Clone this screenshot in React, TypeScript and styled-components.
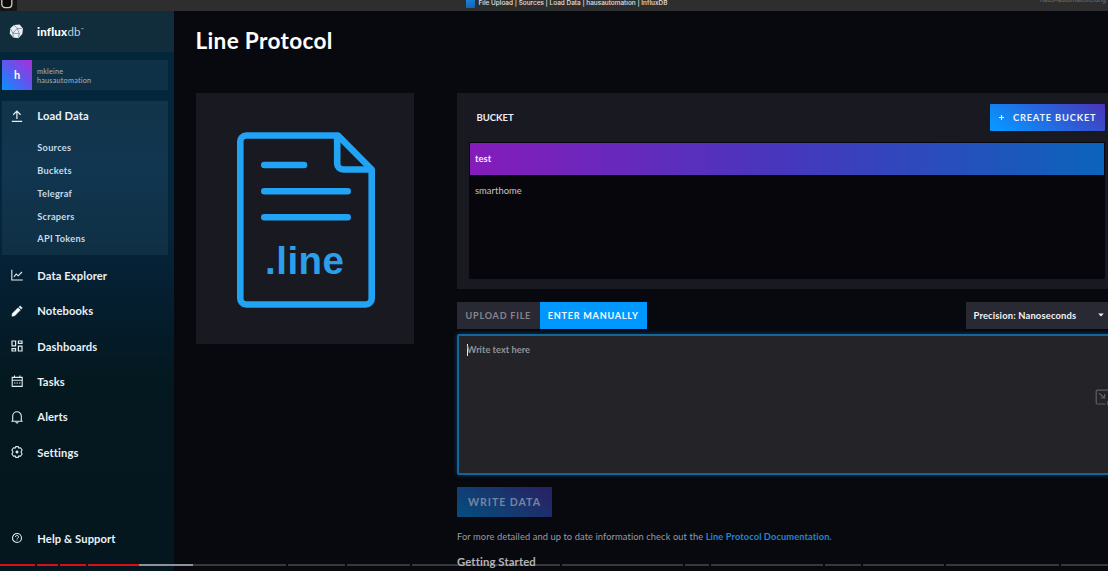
import React from 'react';
import styled, { createGlobalStyle } from 'styled-components';

const GlobalStyle = createGlobalStyle`
  * { box-sizing: border-box; }
  body {
    margin: 0;
    background: #08080f;
    overflow: hidden;
    font-family: Lato, "Liberation Sans", sans-serif;
  }
`;

const Page = styled.div`
  position: relative;
  display: flex;
  flex-direction: column;
  width: 1108px;
  height: 571px;
  overflow: hidden;
  background: #08080f;
  color: #f1f1f3;
`;

const TitleBar = styled.header`
  display: grid;
  grid-template-columns: 466px 1fr 68px;
  flex: none;
  height: 11px;
  overflow: hidden;
  background: #2e2e2e;
  font-family: Inter, sans-serif;
`;

const Corner = styled.div`
  width: 17px;
  height: 11px;
  background: #151515;
  svg { display: block; }
`;

const TabTitle = styled.div`
  display: flex;
  align-items: center;
  gap: 3.5px;
  height: 7px;
  font-size: 6.45px;
  font-weight: 500;
  line-height: 7px;
  white-space: nowrap;
  color: #e2e2e2;
`;

const Favicon = styled.span`
  width: 9px;
  height: 9px;
  border-radius: 1px;
  background: linear-gradient(160deg, #2085d8, #0c63b4);
`;

const WindowNote = styled.div`
  margin-top: -4px;
  font-size: 6.4px;
  line-height: 8px;
  white-space: nowrap;
  color: #757575;
`;

const Body = styled.div`
  display: flex;
  flex: 1;
  min-height: 0;
`;

const Sidebar = styled.nav`
  display: flex;
  flex-direction: column;
  flex: none;
  width: 173.5px;
  height: 560px;
  background: linear-gradient(180deg, #04263b 0%, #05263c 38%, #051f31 50%, #04181f 66%, #04171f 100%);
`;

const Brand = styled.div`
  display: flex;
  align-items: center;
  gap: 13px;
  flex: none;
  height: 41px;
  padding-left: 9px;
  background: #112c3b;
`;

const Wordmark = styled.div`
  font-size: 11.5px;
  line-height: 14px;
  letter-spacing: 0.22px;
  color: #c3d0d8;
  b { color: #fff; font-weight: 900; }
  sup { font-size: 4px; line-height: 0; vertical-align: 5px; }
`;

const Account = styled.div`
  display: flex;
  flex: none;
  width: 166px;
  height: 30px;
  margin: 8px 0 0 2px;
  background: #0e3147;
`;

const Avatar = styled.div`
  display: flex;
  align-items: center;
  justify-content: center;
  width: 30px;
  height: 30px;
  padding-bottom: 2px;
  background: linear-gradient(45deg, #0d8dff 5%, #5b59ee 50%, #a92fd8 100%);
  font-size: 11px;
  font-weight: 700;
  color: #fff;
`;

const AccountText = styled.div`
  padding: 7px 0 0 5px;
  font-size: 7.3px;
  line-height: 9px;
  letter-spacing: 0.2px;
  color: #9fb5c4;
`;

const OpenSection = styled.div`
  flex: none;
  width: 166px;
  height: 154px;
  margin: 11px 0 2.6px 2px;
  background: linear-gradient(180deg, #11344a, #113650 45%, #0f2f43);
`;

const NavRow = styled.div<{ $height: number; $inset?: number }>`
  display: flex;
  align-items: center;
  flex: none;
  gap: 13.3px;
  height: ${(p) => p.$height}px;
  padding-left: ${(p) => 10 - (p.$inset ?? 0)}px;
  font-size: 11.2px;
  font-weight: 700;
  letter-spacing: 0.1px;
  color: #eaf2f7;
  svg { display: block; flex: none; }
`;

const SubList = styled.div`
  display: flex;
  flex-direction: column;
  padding: 7.2px 0 0 35.3px;
`;

const SubItem = styled.div`
  height: 22.8px;
  font-size: 9.2px;
  font-weight: 700;
  line-height: 22.8px;
  letter-spacing: 0.27px;
  color: #c8dbe8;
`;

const Spacer = styled.div`
  flex: 1;
`;

const Main = styled.main`
  flex: 1;
  min-width: 0;
  padding-left: 22px;
`;

const Title = styled.h1`
  margin: 0;
  padding-top: 16px;
  height: 82.4px;
  font-size: 22.6px;
  font-weight: 700;
  line-height: 28px;
  letter-spacing: 0.32px;
  color: #fff;
`;

const Columns = styled.div`
  display: grid;
  grid-template-columns: 218px 680px;
  column-gap: 43.5px;
  align-items: start;
`;

const FileCard = styled.div`
  display: flex;
  justify-content: center;
  height: 250.5px;
  padding: 38.2px 0 0 3px;
  background: #191922;
`;

const Column = styled.section`
  display: flex;
  flex-direction: column;
  align-items: flex-start;
`;

const BucketPanel = styled.div`
  width: 680px;
  height: 195.6px;
  padding: 10.6px 32.3px 0 11.7px;
  background: #191922;
`;

const BucketHeader = styled.div`
  display: flex;
  align-items: center;
  justify-content: space-between;
  height: 27px;
  padding-left: 7.7px;
  font-size: 9.5px;
  font-weight: 700;
  color: #eeeef2;
`;

const Button = styled.button<{ $kind: 'primary' | 'muted' }>`
  display: flex;
  align-items: center;
  justify-content: center;
  border: 0;
  padding: 0;
  gap: 8px;
  width: ${(p) => (p.$kind === 'primary' ? 115 : 95)}px;
  height: ${(p) => (p.$kind === 'primary' ? 27 : 30)}px;
  margin-top: ${(p) => (p.$kind === 'primary' ? 0 : 12)}px;
  border-radius: 1px;
  background: ${(p) =>
    p.$kind === 'primary'
      ? 'linear-gradient(35deg, #0896ff 8%, #2667dd 50%, #4a34b8 100%)'
      : 'linear-gradient(35deg, #084a7c 8%, #16386f 50%, #2a1f62 100%)'};
  font-family: inherit;
  font-size: ${(p) => (p.$kind === 'primary' ? 9.3 : 10.6)}px;
  font-weight: 700;
  letter-spacing: ${(p) => (p.$kind === 'primary' ? 0.82 : 0.95)}px;
  white-space: nowrap;
  color: ${(p) => (p.$kind === 'primary' ? '#eaf4ff' : '#7484a2')};
`;

const BucketList = styled.div`
  height: 137px;
  margin-top: 11px;
  padding: 1.2px 1px;
  background: #06060c;
  border-radius: 1px;
`;

const Bucket = styled.div<{ $selected?: boolean }>`
  height: 31.5px;
  padding-left: 5.2px;
  font-size: 9.4px;
  font-weight: ${(p) => (p.$selected ? 700 : 400)};
  line-height: 31px;
  letter-spacing: 0.06px;
  color: ${(p) => (p.$selected ? '#f7eaff' : '#c3c3cb')};
  background: ${(p) => (p.$selected ? 'linear-gradient(90deg, #851cba, #4637bd 50%, #0b64bb)' : 'none')};
`;

const Controls = styled.div`
  display: flex;
  width: 100%;
  height: 27px;
  margin-top: 13px;
`;

const ModeTab = styled.div<{ $width: number; $active?: boolean }>`
  width: ${(p) => p.$width}px;
  background: ${(p) => (p.$active ? '#0098ff' : '#292933')};
  color: ${(p) => (p.$active ? '#f3faff' : '#85858f')};
  font-size: 9.1px;
  font-weight: 700;
  line-height: 27px;
  letter-spacing: 0.75px;
  text-align: center;
  white-space: nowrap;
`;

const Precision = styled.div`
  display: flex;
  align-items: center;
  width: 161px;
  margin-left: 319px;
  padding-left: 7.8px;
  gap: 22px;
  background: #292933;
  font-size: 9.4px;
  font-weight: 700;
  letter-spacing: 0.17px;
  white-space: nowrap;
`;

const Editor = styled.div`
  display: flex;
  align-items: flex-start;
  width: 680px;
  height: 141px;
  margin-top: 5px;
  padding: 8px 0 0 7.8px;
  border: 2px solid #14669a;
  border-radius: 2px;
  box-shadow: 0 0 4px #04456b;
  background: #242428;
  font-size: 9.3px;
  font-weight: 700;
  line-height: 12px;
  color: #939398;
`;

const Caret = styled.span`
  width: 1px;
  height: 12px;
  margin-right: -1px;
  background: #e8e8ea;
`;

const ExpandBadge = styled.div`
  position: absolute;
  left: 1094.5px;
  top: 389px;
`;

const Docs = styled.p`
  margin: 13px 0 0;
  font-size: 9.3px;
  line-height: 14px;
  letter-spacing: 0.09px;
  color: #9a9aa3;
  b { color: #1f86cf; }
`;

const Subheading = styled.h2`
  position: relative;
  z-index: 2;
  margin: 11px 0 0;
  font-size: 11.3px;
  font-weight: 700;
  line-height: 14px;
  letter-spacing: 0.11px;
  color: #b3b3b8;
`;

const Progress = styled.div`
  position: absolute;
  z-index: 1;
  left: 0;
  right: 0;
  top: 564px;
  display: flex;
  gap: 2px;
  height: 2px;
`;

const Segment = styled.span<{ $width: number; $fill: string }>`
  flex: none;
  width: ${(p) => p.$width}px;
  background: ${(p) => p.$fill};
`;

const Icon = ({ children }: { children: React.ReactNode }) => (
  <svg width="14" height="14" viewBox="0 0 14 14" fill="none" stroke="#e3edf3" strokeWidth="1.1">
    {children}
  </svg>
);

const UploadIcon = () => (
  <Icon>
    <path d="M6.9 10V2.2M3.2 5.8L6.9 2.1L10.6 5.8M1.8 12.3H12.2" strokeWidth="1.25" />
  </Icon>
);

const NAV = [
  { label: 'Data Explorer', icon: <Icon><path d="M1.8 1.8V12H12.8M4 8.8L6.2 6L8.2 7.8L12 4" /></Icon> },
  {
    label: 'Notebooks',
    icon: (
      <Icon>
        <path
          d="M1.9 12.2L2.3 9.4L8.1 3.8L10.4 6L4.7 11.8ZM9 2.9L10.1 1.9L12.3 4L11.2 5.1Z"
          fill="#fff"
          strokeWidth=".6"
        />
      </Icon>
    ),
  },
  {
    label: 'Dashboards',
    icon: (
      <Icon>
        <path d="M2 2H5.6V6.8H2ZM8.4 2H12V4.4H8.4ZM2 9.6H5.6V12H2ZM8.4 7.2H12V12H8.4Z" strokeWidth="1.2" />
      </Icon>
    ),
  },
  {
    label: 'Tasks',
    icon: (
      <Icon>
        <path d="M2.2 3.4H12.2V12.4H2.2ZM2.2 6.2H12.2M4.5 1.5V3.5M9.9 1.5V3.5" />
        <path d="M4 9H5.4M6.5 9H7.9M9 9H10.4" />
      </Icon>
    ),
  },
  {
    label: 'Alerts',
    icon: (
      <Icon>
        <path d="M1.3 11.2H12.7M2.7 11V6.2A4.3 4.4 0 0 1 11.3 6.2V11M5.8 12.3A1.3 1.2 0 0 0 8.2 12.3" />
      </Icon>
    ),
  },
  {
    label: 'Settings',
    icon: (
      <Icon>
        <path
          d="M5.7 1.6H8.3L8.8 3.1L10.5 2.8L12.1 5L11 7L12.1 9L10.5 11.2L8.8 10.9L8.3 12.4H5.7L5.2 10.9L3.5 11.2L1.9 9L3 7L1.9 5L3.5 2.8L5.2 3.1Z"
          strokeLinejoin="round"
        />
        <circle cx="7" cy="7" r="1.2" fill="#e3edf3" strokeWidth=".6" />
      </Icon>
    ),
  },
];

const Logo = () => (
  <svg width="15" height="15" viewBox="0 0 15 15">
    <path d="M5 .9L10.6 .4L14 4.4L13.3 10L9.4 14.2L4.2 13.4L.8 9.4L1.3 4.2Z" fill="#e9eef1" />
    <path
      d="M5 1L8.2 4.4L13 4.6M8.2 4.4L3.8 9.2L10.4 9.8L8.2 4.4M3.8 9.2L1.6 4.8M3.8 9.2L4.4 13M10.4 9.8L9.2 13.6"
      fill="none"
      stroke="#4d6472"
      strokeWidth=".6"
    />
  </svg>
);

const LineFile = () => (
  <svg width="138" height="178" viewBox="0 0 138 178" fill="none" stroke="#22a3f3" strokeWidth="6.6">
    <path
      d="M101 3.5H9.3A6 6 0 0 0 3.3 9.5V166.5A6 6 0 0 0 9.3 172.5H128.7A6 6 0 0 0 134.7 166.5V37.5Z"
      strokeLinejoin="round"
    />
    <path d="M100.2 4V31.5A6 6 0 0 0 106.2 37.5H134" />
    <path d="M27.3 33H67M27.3 59.2H110.7M27.3 85.3H110.7" strokeLinecap="round" />
    <text
      x="28"
      y="142"
      fill="#2b9fea"
      stroke="none"
      fontFamily="'Liberation Sans', sans-serif"
      fontSize="38.5"
      fontWeight="700"
      textLength="79"
    >
      .line
    </text>
  </svg>
);

const RED = '#d90f17';
const IDLE = '#37373c';
const SEGMENTS: [number, string][] = [
  [35, RED],
  [21, RED],
  [26, RED],
];
const LATER = [57, 63, 148, 121, 24, 112, 36, 81, 113, 47];

export default function App() {
  return (
    <>
      <GlobalStyle />
      <Page>
        <TitleBar>
          <Corner>
            <svg width="17" height="11" viewBox="0 0 17 11">
              <rect x="1.8" y="-4" width="10" height="11.6" rx="3.4" fill="#090909" stroke="#d5c9bd" strokeWidth="1.3" />
            </svg>
          </Corner>
          <TabTitle>
            <Favicon />
            File Upload | Sources | Load Data | hausautomation | InfluxDB
          </TabTitle>
          <WindowNote>haus-automatisierung</WindowNote>
        </TitleBar>
        <Body>
          <Sidebar>
            <Brand>
              <Logo />
              <Wordmark>
                <b>influx</b>db<sup>™</sup>
              </Wordmark>
            </Brand>
            <Account>
              <Avatar>h</Avatar>
              <AccountText>
                mkleine
                <br />
                hausautomation
              </AccountText>
            </Account>
            <OpenSection>
              <NavRow $height={29} $inset={2}>
                <UploadIcon />
                Load Data
              </NavRow>
              <SubList>
                {['Sources', 'Buckets', 'Telegraf', 'Scrapers', 'API Tokens'].map((s) => (
                  <SubItem key={s}>{s}</SubItem>
                ))}
              </SubList>
            </OpenSection>
            {NAV.map((n) => (
              <NavRow key={n.label} $height={35.4}>
                {n.icon}
                {n.label}
              </NavRow>
            ))}
            <Spacer />
            <NavRow $height={65.5}>
              <Icon>
                <circle cx="7" cy="7" r="4.5" />
                <path d="M5.5 6A1.5 1.4 0 1 1 7.4 7.2L7 7.8M7 8.6V9.6" strokeWidth=".9" />
              </Icon>
              Help &amp; Support
            </NavRow>
          </Sidebar>
          <Main>
            <Title>Line Protocol</Title>
            <Columns>
              <FileCard>
                <LineFile />
              </FileCard>
              <Column>
                <BucketPanel>
                  <BucketHeader>
                    BUCKET
                    <Button $kind="primary">
                      <svg width="7" height="7" viewBox="0 0 7 7" stroke="#eaf4ff" strokeWidth="1.1">
                        <path d="M3.5 1V6M1 3.5H6" />
                      </svg>
                      CREATE BUCKET
                    </Button>
                  </BucketHeader>
                  <BucketList>
                    <Bucket $selected>test</Bucket>
                    <Bucket>smarthome</Bucket>
                  </BucketList>
                </BucketPanel>
                <Controls>
                  <ModeTab $width={82.7}>UPLOAD FILE</ModeTab>
                  <ModeTab $width={107} $active>
                    ENTER MANUALLY
                  </ModeTab>
                  <Precision>
                    Precision: Nanoseconds
                    <svg width="6" height="4" viewBox="0 0 6 4">
                      <path d="M.2 .4H5.8L3 3.6Z" fill="#f0f0f3" />
                    </svg>
                  </Precision>
                </Controls>
                <Editor>
                  <Caret />
                  Write text here
                </Editor>
                <Button $kind="muted">WRITE DATA</Button>
                <Docs>
                  For more detailed and up to date information check out the <b>Line Protocol Documentation.</b>
                </Docs>
                <Subheading>Getting Started</Subheading>
              </Column>
            </Columns>
          </Main>
        </Body>
        <ExpandBadge>
          <svg width="14" height="17" viewBox="0 0 14 17" fill="none" stroke="#606064" strokeWidth="1.2">
            <path d="M14 1.2H2.4Q1.2 1.2 1.2 2.4V13.8Q1.2 15 2.4 15H10.5M4 4.2L9.4 8.8M9.6 5V9H5.6" />
            <path d="M12.8 12V15.5H14" />
          </svg>
        </ExpandBadge>
        <Progress>
          {SEGMENTS.map(([w, fill], i) => (
            <Segment key={i} $width={w} $fill={fill} />
          ))}
          <Segment $width={198} $fill={`linear-gradient(90deg, ${RED} 51px, #8d9499 51px 105px, ${IDLE} 105px)`} />
          {LATER.map((w, i) => (
            <Segment key={i} $width={w} $fill={IDLE} />
          ))}
        </Progress>
      </Page>
    </>
  );
}
